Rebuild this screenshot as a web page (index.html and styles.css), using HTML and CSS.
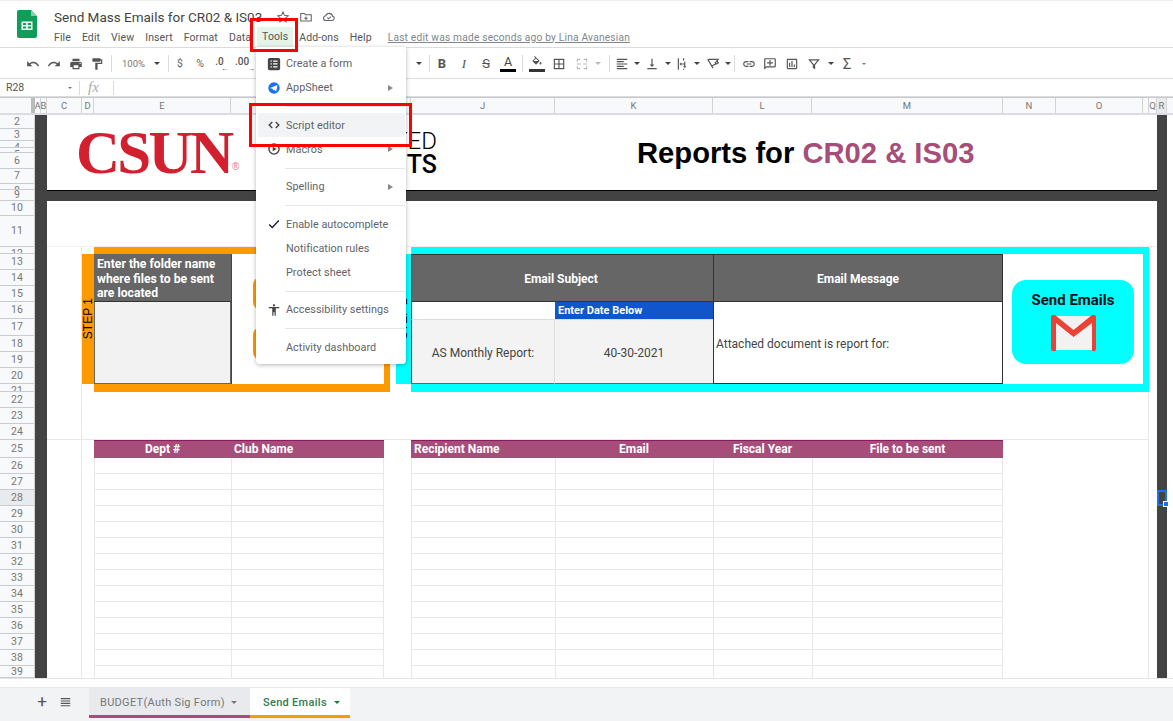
FILE: index.html
```html
<!DOCTYPE html>
<html lang="en">
<head>
<meta charset="utf-8">
<title>Send Mass Emails for CR02 &amp; IS03</title>
<link rel="stylesheet" href="styles.css">
</head>
<body>
<div class="app">
  <header class="titlebar">
    <svg class="doc-logo" viewBox="0 0 20 28"><path fill="#0f9d58" d="M2 0h12l6 6v20a2 2 0 0 1-2 2H2a2 2 0 0 1-2-2V2a2 2 0 0 1 2-2z"/><path fill="#87ceac" d="M14 0l6 6h-6z"/><path fill="#fff" d="M4.500 11.500h11v8.500h-11zM6 13v2h3.200v-2zM10.800 13v2H14v-2zM6 16.500v2h3.200v-2zM10.800 16.500v2H14v-2z" fill-rule="evenodd"/></svg>
    <div class="title-col">
      <div class="title-row">
        <span class="doc-name">Send Mass Emails for CR02 &amp; IS03</span>
        <svg class="title-ic star" viewBox="0 0 24 24"><path d="M12 3.500l2.600 5.700 6.200.7-4.600 4.200 1.300 6.100-5.500-3.100-5.500 3.100 1.300-6.100-4.600-4.200 6.200-.7z"/></svg>
        <svg class="title-ic" viewBox="0 0 24 24"><path d="M3 6h6l2 2h10v11H3zM12 11v6M9 14h6"/></svg>
        <svg class="title-ic" viewBox="0 0 24 24"><path d="M7 18a4 4 0 0 1-.6-8A6 6 0 0 1 18 10.500a3.800 3.800 0 0 1-.5 7.500zM9 13l2.200 2.200 4-4"/></svg>
      </div>
      <nav class="menubar">
        <span>File</span><span>Edit</span><span>View</span><span>Insert</span><span>Format</span><span>Data</span><span class="menu-on">Tools</span><span>Add-ons</span><span>Help</span><a class="last-edit">Last edit was made seconds ago by Lina Avanesian</a>
      </nav>
    </div>
  </header>

  <div class="toolbar">
    <span class="t w21"><svg class="ic" viewBox="0 0 24 24"><path d="M12.500 8c-2.650 0-5.050.99-6.900 2.600L2 7v9h9l-3.620-3.620c1.390-1.160 3.160-1.880 5.120-1.880 3.540 0 6.550 2.310 7.600 5.500l2.370-.78C21.080 11.030 17.150 8 12.500 8z"/></svg></span>
    <span class="t w21"><svg class="ic" viewBox="0 0 24 24"><path d="M18.400 10.600C16.550 8.990 14.150 8 11.500 8c-4.650 0-8.580 3.030-9.960 7.220L3.900 16c1.050-3.190 4.050-5.500 7.600-5.500 1.950 0 3.730.72 5.120 1.880L13 16h9V7l-3.600 3.600z"/></svg></span>
    <span class="t w21"><svg class="ic" viewBox="0 0 24 24"><path d="M19 8H5c-1.660 0-3 1.340-3 3v6h4v4h12v-4h4v-6c0-1.660-1.340-3-3-3zm-3 11H8v-5h8v5zm3-7c-.55 0-1-.45-1-1s.45-1 1-1 1 .45 1 1-.45 1-1 1zm-1-9H6v4h12V3z"/></svg></span>
    <span class="t w21"><svg class="ic" viewBox="0 0 24 24"><path d="M18 4V3c0-.55-.45-1-1-1H5c-.55 0-1 .45-1 1v4c0 .55.45 1 1 1h12c.55 0 1-.45 1-1V6h1v4H9v11c0 .55.45 1 1 1h2c.55 0 1-.45 1-1v-9h8V4h-3z"/></svg></span>
    <i class="sep s-a"></i>
    <span class="t w33 zoomv">100%</span>
    <span class="t w14"><i class="caret"></i></span>
    <i class="sep s-b"></i>
    <span class="t w20 txt">$</span>
    <span class="t w20 txt">%</span>
    <span class="t w19 dec">.0<i class="arr">←</i></span>
    <span class="t w26 dec">.00<i class="arr">→</i></span>
    <span class="tb-gap"></span>
    <span class="t w14"><i class="caret"></i></span>
    <i class="sep s-c"></i>
    <span class="t w22 bold">B</span>
    <span class="t w22 ital">I</span>
    <span class="t w22 strike">S</span>
    <span class="t w22 colora">A</span>
    <i class="sep s-d"></i>
    <span class="t w22 fill"><svg class="ic ic-s" viewBox="0 0 24 24"><path d="M16.560 8.940L7.620 0 6.210 1.410l2.380 2.380-5.150 5.150c-.59.59-.59 1.540 0 2.120l5.500 5.500c.29.29.68.44 1.060.44s.77-.15 1.060-.44l5.500-5.500c.59-.58.59-1.530 0-2.120zM5.210 10L10 5.210 14.790 10H5.210zM19 11.500s-2 2.170-2 3.500c0 1.100.9 2 2 2s2-.9 2-2c0-1.330-2-3.500-2-3.500z"/></svg></span>
    <span class="t w22"><svg class="ic" viewBox="0 0 24 24"><path d="M3 3v18h18V3H3zm8 16H5v-6h6v6zm0-8H5V5h6v6zm8 8h-6v-6h6v6zm0-8h-6V5h6v6z"/></svg></span>
    <span class="t w23"><svg class="ic ic-off" viewBox="0 0 24 24"><path d="M3 3h6v2H5v3H3zM15 3h6v5h-2V5h-4zM3 16h2v3h4v2H3zM19 16h2v5h-6v-2h4zM3 11h7v2H3zM14 11h7v2h-7z"/></svg></span>
    <span class="t w10"><i class="caret caret-off"></i></span>
    <i class="sep s-e"></i>
    <span class="t w20"><svg class="ic" viewBox="0 0 24 24"><path d="M15 15H3v2h12v-2zm0-8H3v2h12V7zM3 13h18v-2H3v2zm0 8h18v-2H3v2zM3 3v2h18V3H3z"/></svg></span>
    <span class="t w9"><i class="caret"></i></span>
    <span class="t w21"><svg class="ic" viewBox="0 0 24 24"><path d="M16 13h-3V3h-2v10H8l4 4 4-4zM4 19v2h16v-2H4z"/></svg></span>
    <span class="t w9"><i class="caret"></i></span>
    <span class="t w20"><svg class="ic" viewBox="0 0 24 24"><path d="M3 2h2v20H3zM12 2h2v4h-2zM12 8h2v3h-5V9l-3 3 3 3v-2h5v3h-2l3 3 3-3h-2V8h0zM12 20h2v2h-2z"/></svg></span>
    <span class="t w9"><i class="caret"></i></span>
    <span class="t w21"><svg class="ic ic-line" viewBox="0 0 24 24"><path d="M3 4h18L15 11M3 4l9 15M9 16l12-6M19 7l2 3-3 2"/></svg></span>
    <span class="t w9"><i class="caret"></i></span>
    <i class="sep s-f"></i>
    <span class="t w21"><svg class="ic" viewBox="0 0 24 24"><path d="M3.900 12c0-1.710 1.390-3.100 3.100-3.100h4V7H7c-2.760 0-5 2.240-5 5s2.240 5 5 5h4v-1.900H7c-1.710 0-3.100-1.390-3.100-3.100zM8 13h8v-2H8v2zm9-6h-4v1.900h4c1.710 0 3.100 1.390 3.100 3.100s-1.390 3.100-3.100 3.100h-4V17h4c2.760 0 5-2.240 5-5s-2.240-5-5-5z"/></svg></span>
    <span class="t w21"><svg class="ic" viewBox="0 0 24 24"><path d="M20 2H4c-1.100 0-2 .9-2 2v18l4-4h14c1.100 0 2-.9 2-2V4c0-1.100-.9-2-2-2zm0 14H5.170L4 17.170V4h16v12zM13 5h-2v4H7v2h4v4h2v-4h4V9h-4z"/></svg></span>
    <span class="t w21"><svg class="ic" viewBox="0 0 24 24"><path d="M9 17H7v-7h2v7zm4 0h-2V7h2v10zm4 0h-2v-4h2v4zm2 2H5V5h14v14zm0-16H5c-1.100 0-2 .9-2 2v14c0 1.100.9 2 2 2h14c1.100 0 2-.9 2-2V5c0-1.100-.9-2-2-2z"/></svg></span>
    <span class="t w23"><svg class="ic" viewBox="0 0 24 24"><path d="M2 4h20l-8 9.500V21l-4-2v-5.500zM6.300 6l5.700 6.800L17.700 6z" fill-rule="evenodd"/></svg></span>
    <span class="t w10"><i class="caret"></i></span>
    <span class="t w23 sigma">Σ</span>
    <span class="t w10"><i class="caret caret-sm"></i></span>
  </div>

  <div class="formula">
    <span class="namebox">R28</span>
    <i class="caret caret-sm name-caret"></i>
    <i class="fsep"></i>
    <span class="fx">fx</span>
    <i class="fsep"></i>
  </div>

  <div class="colhead">
    <span class="corner"></span>
    <span>A</span><span>B</span><span>C</span><span>D</span><span>E</span><span>F</span><span>G</span><span>H</span><span>I</span><span>J</span><span>K</span><span>L</span><span>M</span><span>N</span><span>O</span><span></span><span>Q</span><span class="col-on">R</span>
  </div>

  <div class="sheet">
    <div class="rowhead">
      <span>2</span><span>3</span><span class="rs">4</span><span class="rs">5</span><span>6</span><span>7</span><span class="rs">8</span><span>9</span><span>10</span><span>11</span><span class="rs">12</span><span>13</span><span>14</span><span>15</span><span>16</span><span>17</span><span>18</span><span>19</span><span>20</span><span class="rs">21</span><span>22</span><span>23</span><span>24</span><span>25</span><span>26</span><span>27</span><span class="row-on">28</span><span>29</span><span>30</span><span>31</span><span>32</span><span>33</span><span>34</span><span>35</span><span>36</span><span>37</span><span>38</span><span>39</span>
    </div>
    <div class="canvas">
      <div class="line-c"></div>
      <div class="line-p"></div>
      <div class="line-11"></div>
      <div class="line-24"></div>

      <div class="hero">
        <div class="csun">CSUN<span class="reg">®</span></div>
        <div class="assoc"><span class="assoc-a">ASSOCIATED</span><span class="assoc-b">STUDENTS</span></div>
        <h1 class="report">Reports for <span class="report-em">CR02 &amp; IS03</span></h1>
      </div>
      <div class="band-l"></div>
      <div class="band-r"></div>
      <div class="band-top"></div>

      <div class="o-top"></div>
      <div class="o-bot"></div>
      <div class="o-right"></div>
      <div class="o-left"><span class="vtext">STEP 1</span></div>
      <div class="folder-h">Enter the folder name where files to be sent are located</div>
      <div class="folder-b"></div>
      <div class="folder-actions"><span class="o-btn"></span><span class="o-btn"></span></div>

      <div class="c-top"></div>
      <div class="c-bot"></div>
      <div class="c-right"></div>
      <div class="c-left"><span class="vtext">STEP 2</span></div>
      <div class="subj-h">Email Subject</div>
      <div class="msg-h">Email Message</div>
      <div class="subj-blank"></div>
      <div class="date-h">Enter Date Below</div>
      <div class="subj-v">AS Monthly Report:</div>
      <div class="date-v">40-30-2021</div>
      <div class="msg-v">Attached document is report for:</div>
      <div class="send-wrap">
        <div class="send-btn">
          <span>Send Emails</span>
          <svg class="gmail" viewBox="0 0 45 36"><path fill="#f2f2f2" d="M1 1h43v34H1z"/><path fill="#ea4335" d="M0 2a2 2 0 0 1 2-2h2l18.500 15L41 0h2a2 2 0 0 1 2 2v32a2 2 0 0 1-2 2h-2V8L22.500 22 5 8v28H2a2 2 0 0 1-2-2z"/></svg>
        </div>
      </div>

      <div class="th th-e center">Dept #</div>
      <div class="th th-f">Club Name</div>
      <div class="th th-j">Recipient Name</div>
      <div class="th th-k center">Email</div>
      <div class="th th-l center">Fiscal Year</div>
      <div class="th th-m center">File to be sent</div>
      <div class="rows rows-l"></div>
      <div class="rows rows-r"></div>

      <div class="selected"><i class="handle"></i></div>
    </div>
  </div>

  <div class="spacer"></div>

  <footer class="tabbar">
    <span class="tab-add">+</span>
    <svg class="tab-all" viewBox="0 0 14 12"><path d="M1 1h12v1.500H1zM1 4h12v1.500H1zM1 7h12v1.500H1zM1 10h12v1.500H1z"/></svg>
    <div class="tab tab-budget">BUDGET(Auth Sig Form)<i class="caret"></i></div>
    <div class="tab tab-send">Send Emails<i class="caret caret-green"></i></div>
  </footer>

  <div class="menu">
    <div class="mi"><svg class="mic" viewBox="0 0 16 16"><rect x="1" y="1" width="14" height="14" rx="2" fill="#444"/><path fill="#fff" d="M4 4h1.500v1.500H4zM7 4h5v1.500H7zM4 7.200h1.500v1.500H4zM7 7.200h5v1.500H7zM4 10.500h1.500V12H4zM7 10.500h5V12H7z"/></svg>Create a form</div>
    <div class="mi"><svg class="mic" viewBox="0 0 16 16"><circle cx="8" cy="8" r="6.500" fill="#1a73e8"/><path fill="#fff" d="M3.500 8L12 4.500 10.500 12 8 9.800 7 11.200 6.700 9z"/></svg>AppSheet<i class="sub"></i></div>
    <div class="mdiv"></div>
    <div class="mi mi-on"><svg class="mic mic-line" viewBox="0 0 16 16"><path d="M6 4.500L2.500 8 6 11.500M10 4.500L13.500 8 10 11.500"/></svg>Script editor</div>
    <div class="mi"><svg class="mic mic-line" viewBox="0 0 16 16"><circle cx="8" cy="8" r="5.800"/><path class="mic-fill" d="M6.500 5.300L11 8l-4.500 2.700z"/></svg>Macros<i class="sub"></i></div>
    <div class="mdiv"></div>
    <div class="mi"><span class="mic"></span>Spelling<i class="sub"></i></div>
    <div class="mdiv"></div>
    <div class="mi"><svg class="mic mic-line mic-dark" viewBox="0 0 16 16"><path d="M2.500 8.500L6 12l7.500-8"/></svg>Enable autocomplete</div>
    <div class="mi"><span class="mic"></span>Notification rules</div>
    <div class="mi"><span class="mic"></span>Protect sheet</div>
    <div class="mdiv"></div>
    <div class="mi"><svg class="mic" viewBox="0 0 24 24"><path fill="#444" d="M12 2c1.100 0 2 .9 2 2s-.9 2-2 2-2-.9-2-2 .9-2 2-2zm9 7h-6v13h-2v-6h-2v6H9V9H3V7h18v2z"/></svg>Accessibility settings</div>
    <div class="mdiv"></div>
    <div class="mi"><span class="mic"></span>Activity dashboard</div>
  </div>

  <div class="redbox red-tools"></div>
  <div class="redbox red-script"></div>
</div>
</body>
</html>
```
FILE: styles.css
```css
:root {
  --cols: [A] 6px [B] 6px [C] 35px [D] 12px [E] 137px [F] 153px [G] 6px [H] 6px [I] 15px [J] 144px [K] 158px [L] 99px [M] 191px [N] 53px [O] 87px [P] 6px [Q] 8px [R] 10px [end];
  --rows: [r2] 14px [r3] 12px [r4] 7px [r5] 5px [r6] 16px [r7] 15px [r8] 6px [r9] 11px [r10] 15px [r11] 31px [r12] 7px [r13] 16px [r14] 16px [r15] 16px [r16] 17px [r17] 17px [r18] 16px [r19] 16px [r20] 16px [r21] 8px [r22] 16px [r23] 16px [r24] 16px [r25] 18px [r26] 16px [r27] 16px [r28] 16px [r29] 16px [r30] 16px [r31] 16px [r32] 16px [r33] 16px [r34] 16px [r35] 16px [r36] 16px [r37] 16px [r38] 16px [r39] 12px [end];
  --grid: #e8e8e8;
  --dark: #434343;
  --plum: #a64d79;
  --head: #666;
  --orange: #ff9900;
  --cyan: #00ffff;
}
* { box-sizing: border-box; }
html, body { margin: 0; height: 100%; overflow: hidden; }
body { font-family: Roboto, "Liberation Sans", sans-serif; color: #3c4043; background: #fff; }
.app { position: relative; width: 1173px; height: 721px; display: flex; flex-direction: column; overflow: hidden; }

/* title bar */
.titlebar { height: 48px; flex: none; display: flex; border-top: 1px solid #eee; border-bottom: 1px solid #dadce0; }
.doc-logo { width: 20px; height: 28px; margin: 9px 0 0 17px; flex: none; }
.title-col { margin-left: 17px; display: flex; flex-direction: column; }
.title-row { display: flex; align-items: center; height: 20px; margin-top: 6px; }
.doc-name { font-size: 13.500px; color: #444; width: 222px; white-space: nowrap; }
.title-ic { width: 14px; height: 14px; margin-right: 9px; fill: none; stroke: #5f6368; stroke-width: 1.800; flex: none; }
.menubar { display: flex; align-items: center; height: 20px; margin-top: 1px; font-size: 10.500px; color: #555; gap: 11px; letter-spacing: .1px; white-space: nowrap; }
.menu-on { background: #e6f4ea; margin: 0 -5px 0 -5px; padding: 0 5px; height: 20px; line-height: 20px; }
.last-edit { margin-left: 5px; color: #80868b; text-decoration: underline; font-size: 10.200px; letter-spacing: .2px; }

/* toolbar */
.toolbar { height: 31px; flex: none; display: flex; align-items: center; padding: 1px 0 0 22px; border-bottom: 1px solid #dadce0; color: #555; font-size: 10px; }
.t { flex: none; display: flex; align-items: center; justify-content: center; height: 24px; }
.w9 { width: 9.500px; } .w10 { width: 10px; } .w14 { width: 14px; } .w19 { width: 19px; } .w20 { width: 20px; } .w21 { width: 21.500px; } .w22 { width: 22px; } .w23 { width: 23px; } .w26 { width: 26px; } .w33 { width: 33px; }
.ic { width: 14px; height: 14px; fill: #555; }
.ic-off { fill: #b5b7ba; }
.ic-line { fill: none; stroke: #555; stroke-width: 2; }
.sep { flex: none; width: 1px; height: 17px; background: #dadce0; }
.s-a { margin: 0 5px 0 3px; }
.s-b { margin: 0 1px 0 4px; }
.s-c { margin: 0 1px 0 3px; }
.s-d { margin: 0 3px 0 3px; }
.s-e { margin: 0 2px 0 6px; }
.s-f { margin: 0 3px 0 1px; }
.tb-gap { flex: none; width: 157px; }
.zoomv { font-size: 9.500px; color: #777; }
.txt { font-size: 10.500px; color: #666; }
.dec { flex-direction: column; font-size: 10px; line-height: 9px; color: #555; font-weight: 500; }
.arr { font-style: normal; font-size: 8px; line-height: 5px; align-self: flex-end; }
.bold { font-weight: 700; font-size: 13px; color: #555; }
.ital { font-style: italic; font-weight: 500; font-size: 13px; font-family: "Liberation Serif", serif; color: #555; }
.strike { font-size: 13px; text-decoration: line-through; color: #555; }
.colora { flex-direction: column; font-size: 12.500px; line-height: 13px; color: #444; }
.colora::after { content: ""; width: 16px; height: 3px; background: #000; margin-top: 1px; }
.fill { flex-direction: column; }
.fill::after { content: ""; width: 16px; height: 3px; background: #333; margin-top: 1px; }
.ic-s { height: 12px; }
.sigma { font-size: 15px; color: #555; }
.caret { display: inline-block; width: 0; height: 0; border: 3px solid transparent; border-top: 3.500px solid #444; border-bottom: 0; }
.caret-off { border-top-color: #bbb; }
.caret-sm { border-width: 2.500px; border-top-width: 2.500px; border-bottom: 0; border-top-color: #777; }
.caret-green { border-top-color: #188038; }

/* formula bar */
.formula { height: 18px; flex: none; display: flex; align-items: center; border-bottom: 1px solid #dadce0; }
.namebox { font-size: 10.500px; color: #555; margin-left: 6px; width: 62px; }
.name-caret { margin-right: 7px; }
.fsep { width: 1px; height: 14px; background: #dadce0; flex: none; }
.fx { width: 33px; padding-left: 8px; font-family: "Liberation Serif", serif; font-style: italic; font-size: 15px; color: #aaa; }

/* column heads */
.colhead { height: 18px; flex: none; display: grid; grid-template-columns: [h] 35px var(--cols); background: #f8f9fa; border-top: 1px solid #c8c8c8; border-bottom: 2px solid #dadce0; font-size: 9.500px; color: #777; }
.colhead span { display: flex; align-items: center; justify-content: center; border-right: 1px solid #d4d4d4; overflow: hidden; min-width: 0; }
.corner { background: #f8f9fa; border-right: 4px solid #bbb !important; }
.col-on { background: #e8eaed; }

/* sheet */
.sheet { flex: none; height: 563px; display: flex; background: #fff; }
.rowhead { flex: none; width: 35px; display: grid; grid-template-rows: var(--rows); background: #f8f9fa; border-right: 1px solid #d4d4d4; font-size: 10.500px; color: #777; }
.rowhead span { display: flex; align-items: center; justify-content: center; border-bottom: 1px solid #c8ccd0; overflow: hidden; min-height: 0; line-height: 14px; }
.rowhead .rs { align-items: flex-start; }
.row-on { background: #e8eaed; }
.canvas { flex: none; display: grid; grid-template-columns: var(--cols); grid-template-rows: var(--rows); }
.canvas > * { min-width: 0; min-height: 0; }

.line-c { grid-column: C / D; grid-row: r12 / end; border-right: 1px solid var(--grid); }
.line-p { grid-column: P / Q; grid-row: r12 / end; border-right: 1px solid var(--grid); }
.line-11 { grid-column: C / R; grid-row: r11 / r12; border-bottom: 1px solid #efefef; }
.line-24 { grid-column: C / Q; grid-row: r24 / r25; border-bottom: 1px solid var(--grid); }

.band-l { grid-column: A / C; grid-row: r2 / end; background: var(--dark); }
.band-r { grid-column: R / end; grid-row: r2 / end; background: var(--dark); }
.band-top { grid-column: C / R; grid-row: r9 / r10; background: var(--dark); border-top: 1px solid #000; }

/* hero */
.hero { grid-column: C / R; grid-row: r2 / r9; display: flex; align-items: center; padding-left: 29px; overflow: hidden; }
.csun { position: relative; flex: none; width: 172px; font-family: "Liberation Serif", serif; font-weight: 700; font-size: 61px; line-height: 60px; letter-spacing: -2.700px; color: #d2202f; margin-top: 1px; }
.reg { position: absolute; left: 156px; top: 39px; font-size: 10px; line-height: 10px; letter-spacing: 0; font-family: "Liberation Sans", sans-serif; font-weight: 400; color: #e87a85; }
.assoc { flex: none; width: 189px; display: flex; flex-direction: column; align-items: flex-end; color: #000; line-height: 23px; margin-top: 1px; }
.assoc-a { font-weight: 300; font-size: 24px; }
.assoc-b { font-weight: 500; font-size: 25px; }
.report { flex: none; margin: 1px 0 0 200px; font-family: "Liberation Sans", sans-serif; font-weight: 700; font-size: 29.200px; line-height: 36px; color: #000; white-space: nowrap; }
.report-em { color: var(--plum); }

/* step frames */
.o-top { grid-column: E / H; grid-row: r12 / r13; background: var(--orange); }
.o-bot { grid-column: E / H; grid-row: r21 / r22; background: var(--orange); }
.o-right { grid-column: G / H; grid-row: r12 / r22; background: var(--orange); }
.o-left { grid-column: D / E; grid-row: r13 / r21; background: var(--orange); display: flex; align-items: center; justify-content: center; overflow: hidden; }
.vtext { writing-mode: vertical-rl; transform: rotate(180deg); font-family: "Liberation Sans", sans-serif; font-size: 12px; line-height: 12px; color: #000; white-space: nowrap; }
.folder-h { grid-column: E / F; grid-row: r13 / r16; background: var(--head); color: #fff; font-weight: 700; font-size: 12.200px; line-height: 14.500px; padding: 3px 3px 0; border-bottom: 1px solid #333; }
.folder-b { grid-column: E / F; grid-row: r16 / r21; background: #f2f2f2; border: 1px solid #666; border-top: 0; }
.folder-actions { grid-column: F / G; grid-row: r13 / r21; display: flex; flex-direction: column; gap: 17px; padding: 23px 0 0 21px; border-left: 1px solid #444; }
.o-btn { display: block; width: 115px; height: 33px; background: var(--orange); border-radius: 8px; flex: none; }

.c-top { grid-column: J / Q; grid-row: r12 / r13; background: var(--cyan); }
.c-bot { grid-column: J / Q; grid-row: r21 / r22; background: var(--cyan); }
.c-right { grid-column: P / Q; grid-row: r12 / r22; background: var(--cyan); }
.c-left { grid-column: I / J; grid-row: r13 / r21; background: var(--cyan); display: flex; align-items: center; justify-content: flex-end; padding-right: 2px; overflow: hidden; }

.subj-h, .msg-h { grid-row: r13 / r16; background: var(--head); color: #fff; font-weight: 700; font-size: 12px; display: flex; align-items: center; justify-content: center; border: 1px solid #333; border-right: 0; padding-top: 1px; }
.subj-h { grid-column: J / L; padding-right: 3px; }
.msg-h { grid-column: L / N; border-right: 1px solid #333; }
.subj-blank { grid-column: J / K; grid-row: r16 / r17; background: #fff; border-left: 1px solid #333; }
.date-h { grid-column: K / L; grid-row: r16 / r17; background: #1155cc; color: #fff; font-weight: 700; font-size: 11px; line-height: 18px; padding-left: 3px; }
.subj-v, .date-v { grid-row: r17 / r21; background: #f3f3f3; display: flex; align-items: center; justify-content: center; font-size: 12px; color: #444; border-top: 1px solid #ddd; border-bottom: 1px solid #666; padding-top: 2px; }
.subj-v { grid-column: J / K; border-left: 1px solid #333; border-right: 1px solid #ddd; }
.date-v { grid-column: K / L; }
.msg-v { grid-column: L / N; grid-row: r16 / r21; font-size: 12px; color: #444; display: flex; align-items: center; padding: 2px 0 0 2px; border-left: 1px solid #333; border-right: 1px solid #333; border-bottom: 1px solid #333; }
.send-wrap { grid-column: N / P; grid-row: r13 / r21; padding: 26px 9px 0; }
.send-btn { width: 122px; height: 84px; background: var(--cyan); border-radius: 14px; display: flex; flex-direction: column; align-items: center; padding-top: 12px; font-weight: 700; font-size: 15px; line-height: 17px; color: #111; }
.gmail { width: 45px; height: 36px; margin-top: 6px; }

/* lower table */
.th { grid-row: r25 / r26; background: var(--plum); color: #fff; font-weight: 700; font-size: 12px; line-height: 17px; padding-left: 3px; border-top: 1px solid #8c1a62; white-space: nowrap; }
.center { text-align: center; padding-left: 0; }
.th-e { grid-column: E / F; }
.th-f { grid-column: F / G; }
.th-j { grid-column: J / K; }
.th-k { grid-column: K / L; }
.th-l { grid-column: L / M; }
.th-m { grid-column: M / N; }
.rows { grid-row: r26 / end; background-image: repeating-linear-gradient(to bottom, #fff 0 15px, var(--grid) 15px 16px); }
.rows-l { grid-column: E / G; border-left: 1px solid var(--grid); border-right: 1px solid var(--grid); background-image: linear-gradient(var(--grid), var(--grid)), repeating-linear-gradient(to bottom, #fff 0 15px, var(--grid) 15px 16px); background-size: 1px 100%, 100% 100%; background-position: 136px 0, 0 0; background-repeat: no-repeat; }
.rows-r { grid-column: J / N; border-left: 1px solid var(--grid); border-right: 1px solid var(--grid); background-image: linear-gradient(var(--grid), var(--grid)), linear-gradient(var(--grid), var(--grid)), linear-gradient(var(--grid), var(--grid)), repeating-linear-gradient(to bottom, #fff 0 15px, var(--grid) 15px 16px); background-size: 1px 100%, 1px 100%, 1px 100%, 100% 100%; background-position: 143px 0, 301px 0, 400px 0, 0 0; background-repeat: no-repeat; }
.selected { position: relative; grid-column: R / end; grid-row: r28 / r29; border: 2px solid #1a73e8; }
.handle { position: absolute; right: -4px; bottom: -3px; width: 6px; height: 6px; background: #1a73e8; border: 1px solid #fff; }

/* footer */
.spacer { height: 9px; flex: none; border-top: 1px solid #e4e4e4; background: #fff; }
.tabbar { flex: 1; display: flex; align-items: flex-start; background: #f1f3f4; border-top: 1px solid #e8eaed; padding-bottom: 4px; }
.tab-add { width: 16px; margin-left: 34px; text-align: center; font-size: 17px; line-height: 27px; color: #555; font-weight: 400; }
.tab-all { width: 11px; height: 10px; margin: 9px 17px 0 10px; fill: #555; }
.tab { height: 30px; display: flex; align-items: center; font-size: 11px; font-weight: 400; letter-spacing: .3px; padding-top: 1px; border-bottom: 3px solid; white-space: nowrap; }
.tab-budget { width: 161px; margin-left: 1px; padding-left: 11px; gap: 6px; background: #e8eaed; color: #777; border-bottom-color: var(--plum); }
.tab-send { width: 100px; padding-left: 13px; gap: 7px; background: #fff; color: #2e7d4f; font-weight: 500; border-bottom-color: var(--orange); }
.tab-budget .caret { border-top-color: #777; }

/* tools menu */
.menu { position: absolute; left: 256px; top: 47px; width: 150px; height: 317px; padding: 4.400px 1px 0 2px; background: #fff; border-radius: 0 0 4px 4px; box-shadow: 0 1px 4px rgba(0,0,0,.3); font-size: 10.800px; color: #5f6368; letter-spacing: .05px; }
.mi { position: relative; height: 24.300px; display: flex; align-items: center; white-space: nowrap; }
.mi-on { background: #f1f3f4; }
.mic { width: 14px; height: 14px; margin: 0 5px 0 9px; flex: none; display: block; }
.mic-line { fill: none; stroke: #444; stroke-width: 1.600; }
.mic-fill { fill: #444; stroke: none; }
.mic-dark { stroke: #222; }
.sub { position: absolute; right: 12px; top: 9px; width: 0; height: 0; border: 3px solid transparent; border-left: 5px solid #888; border-right: 0; }
.mdiv { height: 13px; margin: 0 0 0 27px; position: relative; }
.mdiv::after { content: ""; display: block; position: relative; top: 6px; height: 1px; background: #e3e5e8; }

/* annotations */
.redbox { position: absolute; border: 3px solid #ff0000; pointer-events: none; }
.red-tools { left: 250px; top: 18px; width: 48px; height: 34px; }
.red-script { left: 249px; top: 103px; width: 163px; height: 44px; }
```
